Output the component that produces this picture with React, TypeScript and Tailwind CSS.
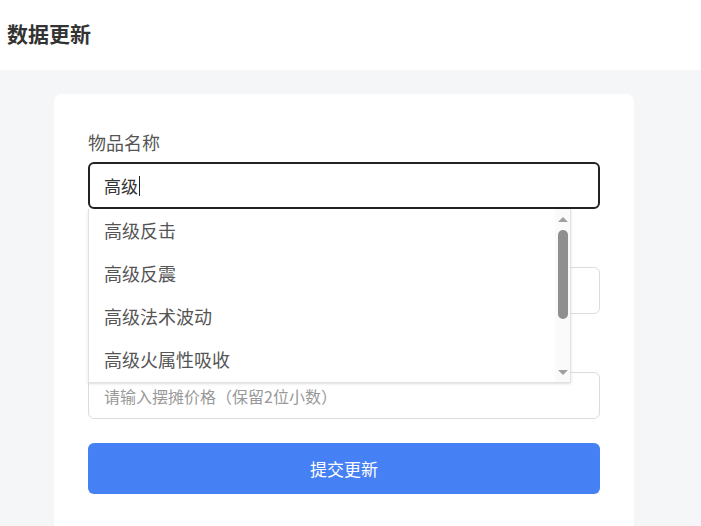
import { useState } from "react";

const suggestions = ["高级反击", "高级反震", "高级法术波动", "高级火属性吸收"];

export default function App() {
  const [name, setName] = useState("高级");

  return (
    <div
      className="min-h-screen bg-[#f5f6f8] text-[#333]"
      style={{ fontFamily: '"Noto Sans CJK SC", "Noto Sans", sans-serif' }}
    >
      <header className="h-[70px] bg-white flex items-center pl-[7px] pb-[3px]">
        <h1 className="text-[21px] font-bold text-[#333]">数据更新</h1>
      </header>

      <main className="pt-6 pl-[54px]">
        <div className="w-[580px] bg-white rounded-lg px-[34px] pt-9 pb-16">
          {/* 物品名称 */}
          <div className="relative">
            <label className="block h-6 leading-6 text-[18px] text-[#555] mb-2">物品名称</label>
            <div className="h-[47px] rounded-md border-2 border-[#222] flex items-center pl-[14px]">
              <span className="text-[17px] text-[#333]">{name}</span>
              <span className="w-px h-[20px] bg-[#222] ml-[1px]" />
              <input className="hidden" value={name} onChange={(e) => setName(e.target.value)} />
            </div>

            {/* datalist dropdown */}
            <div className="absolute left-0 top-[79px] z-10 w-[483px] h-[174px] bg-white border border-[#e2e2e2] border-t-0 shadow-sm flex">
              <ul className="flex-1">
                {suggestions.map((s) => (
                  <li key={s} className="h-[43px] flex items-center pl-[15px] text-[18px] text-[#555]">
                    {s}
                  </li>
                ))}
              </ul>
              <div className="w-[15px] bg-[#fafafa] flex flex-col items-center pt-[8px] pb-[7px]">
                <div className="w-0 h-0 border-l-[5px] border-r-[5px] border-b-[5px] border-l-transparent border-r-transparent border-b-[#a0a0a0]" />
                <div className="w-[10px] h-[89px] mt-[8px] rounded-full bg-[#8f8f8f]" />
                <div className="flex-1" />
                <div className="w-0 h-0 border-l-[5px] border-r-[5px] border-t-[5px] border-l-transparent border-r-transparent border-t-[#a0a0a0]" />
              </div>
            </div>
          </div>

          {/* 摆摊数量 */}
          <div className="mt-[26px]">
            <label className="block h-6 leading-6 text-[18px] text-[#555] mb-2">摆摊数量</label>
            <div className="h-[47px] rounded-md border border-[#dcdcdc] flex items-center pl-[15px]">
              <span className="text-[16px] text-[#999]">请输入摆摊数量</span>
            </div>
          </div>

          {/* 摆摊价格 */}
          <div className="mt-[26px]">
            <label className="block h-6 leading-6 text-[18px] text-[#555] mb-2">摆摊价格</label>
            <div className="h-[47px] rounded-md border border-[#dcdcdc] flex items-center pl-[15px]">
              <span className="text-[16px] text-[#999]">请输入摆摊价格（保留2位小数）</span>
            </div>
          </div>

          <button className="mt-6 w-full h-[51px] rounded-md bg-[#4580f5] text-white text-[17px]">
            提交更新
          </button>
        </div>
      </main>
    </div>
  );
}
